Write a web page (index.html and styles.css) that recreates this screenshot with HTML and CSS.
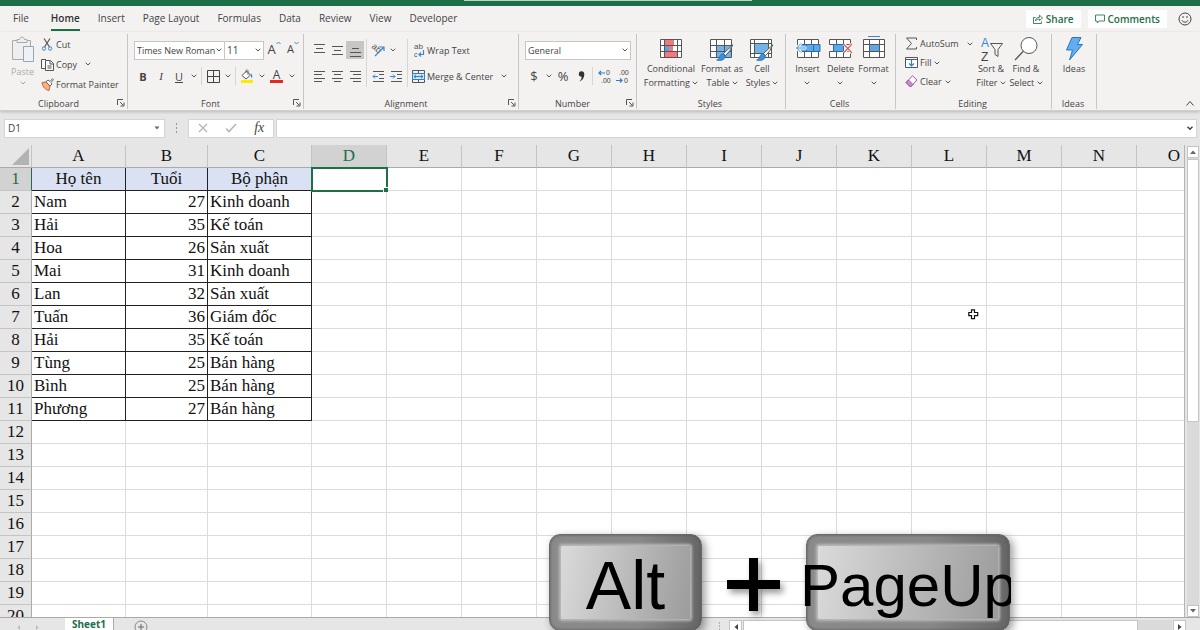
FILE: index.html
```html
<!DOCTYPE html>
<html lang="en">
<head>
<meta charset="utf-8">
<title>Sheet1</title>
<link rel="stylesheet" href="styles.css">
</head>
<body>
<svg class="defs" aria-hidden="true">
  <symbol id="chev" viewBox="0 0 6 4"><path d="M.7.7 3 3 5.300.7" fill="none" stroke="#555" stroke-width="1"/></symbol>
  <symbol id="launch" viewBox="0 0 8 8"><path d="M.5 6V.5H6M3 3l3.500 3.500M7 3.500V7H3.500" fill="none" stroke="#555"/></symbol>
  <symbol id="brush" viewBox="0 0 18 18"><path d="M16.800.8 7.500 9.500l2 2.300Q14.500 7 16.800.8z" fill="#fff" stroke="#555"/><path d="M7 9.700c-3 .2-3 3-4 4.500-.6 1-1.600 1.500-2.300 1.800 3.300 1.300 8.300.3 8.800-4z" fill="#3f8fd6" stroke="#2672b5" stroke-width=".8"/></symbol>
</svg>

<div class="app">
  <div class="titlebar"><div class="titlebar-search"></div></div>

  <nav class="tabs">
    <button class="tab">File</button>
    <button class="tab tab-on">Home</button>
    <button class="tab">Insert</button>
    <button class="tab">Page Layout</button>
    <button class="tab">Formulas</button>
    <button class="tab">Data</button>
    <button class="tab">Review</button>
    <button class="tab">View</button>
    <button class="tab">Developer</button>
    <div class="tabs-right">
      <button class="pill"><svg width="10" height="10" viewBox="0 0 10 10" fill="none" stroke="#2b7a53" stroke-width=".9"><path d="M2.500 3.500h-2v6h8v-2M2.500 7c.3-2.500 1.500-3.700 4-3.700V1.200L9.500 4 6.500 6.500V5C4.500 5 3.500 5.500 2.500 7z"/></svg>Share</button>
      <button class="pill"><svg width="10" height="10" viewBox="0 0 10 10" fill="none" stroke="#2b7a53" stroke-width=".9"><path d="M.5 1h9v6H4L2.200 9V7H.5z"/></svg>Comments</button>
      <button class="smile" aria-label="Feedback"><svg width="14" height="14" viewBox="0 0 14 14" fill="none" stroke="#444"><circle cx="7" cy="7" r="6"/><path d="M4 8.300c1 2.500 5 2.500 6 0M5 4v2M9 4v2"/></svg></button>
    </div>
  </nav>

  <div class="ribbon">
    <section class="group g-clip">
      <div class="body clip-body">
        <button class="big paste">
          <svg width="24" height="27" viewBox="0 0 24 27" fill="#eee" stroke="#aaa"><path d="M1.500 4.500h18v19h-18z"/><path d="M6 6.500V3.500h2.500C9 .3 13 .3 13.500 3.500H16v3z"/><path d="M12.500 10.500h10v15h-10z" fill="#eef1f6" stroke="#9aa6b5"/></svg>
          <span>Paste</span><svg class="chev dim"><use href="#chev"/></svg>
        </button>
        <div class="stack">
          <button class="cmd"><svg width="13" height="13" viewBox="0 0 13 13" fill="none"><path d="M3 .5 8.500 9M9 .5 3.500 9" stroke="#555" stroke-width="1.200"/><circle cx="3" cy="10.500" r="1.700" stroke="#3b86cf"/><circle cx="9.200" cy="10.500" r="1.700" stroke="#3b86cf"/></svg>Cut</button>
          <button class="cmd"><svg width="13" height="13" viewBox="0 0 13 13" fill="#f8f8f8" stroke="#555"><path d="M5 10.500H.5V1.500H5"/><path d="M4.500 2.500h5l3 3v7h-8z"/><path d="M9 3v3h3M6.500 8h4M6.500 10h4"/></svg>Copy<svg class="chev gap"><use href="#chev"/></svg></button>
          <button class="cmd"><svg width="13" height="13" viewBox="0 0 13 13"><path d="M1 4.500 5 4l4 4-1 4.500C4.500 12 1.500 9 1 4.500z" fill="#f3b184" stroke="#c9662c"/><path d="M5 3.800 7 2l2 1.500L11.500.7l1 1L10 4.500 11 6 9 8z" fill="#fff" stroke="#555" stroke-width=".9"/></svg>Format Painter</button>
        </div>
      </div>
      <div class="label"><span>Clipboard</span><svg class="launch"><use href="#launch"/></svg></div>
    </section>

    <section class="group g-font">
      <div class="body rows">
        <div class="row">
          <label class="combo combo-font"><select aria-label="Font"><option>Times New Roman</option></select><svg class="chev"><use href="#chev"/></svg></label>
          <label class="combo combo-size"><select aria-label="Font size"><option>11</option></select><svg class="chev"><use href="#chev"/></svg></label>
          <button class="ib size-up" aria-label="Increase font size">A<svg width="5" height="4" viewBox="0 0 5 4"><path d="M.5 3 2.500 1l2 2" fill="none" stroke="#3b86cf"/></svg></button>
          <button class="ib size-down" aria-label="Decrease font size">A<svg width="5" height="4" viewBox="0 0 5 4"><path d="M.5 1 2.500 3l2-2" fill="none" stroke="#3b86cf"/></svg></button>
        </div>
        <div class="row">
          <button class="ib b">B</button><button class="ib i">I</button><button class="ib u">U</button>
          <button class="ch" aria-label="Underline options"><svg class="chev"><use href="#chev"/></svg></button><i class="sep"></i>
          <button class="ib" aria-label="Borders"><svg width="13" height="13" viewBox="0 0 13 13" fill="none" stroke="#444"><path d="M.5.5h12v12H.5zM6.500.5v12M.5 6.500h12"/></svg></button>
          <button class="ch" aria-label="Border options"><svg class="chev"><use href="#chev"/></svg></button><i class="sep"></i>
          <button class="ib" aria-label="Fill color"><svg width="14" height="14" viewBox="0 0 14 14"><path d="M2 6.500 6.500 2l4 4L6 10z" fill="#fff" stroke="#555"/><path d="M6 4V1.500q1.500-1.500 2 0V6" fill="none" stroke="#555" stroke-width=".8"/><path d="M10.500 4.500q2.500 1 1.500 5-1-1-1.500-5z" fill="#2f7fcc"/><path d="M1 11h12v3H1z" fill="#ffea00"/></svg></button>
          <button class="ch" aria-label="Fill options"><svg class="chev"><use href="#chev"/></svg></button>
          <button class="ib fontcolor" aria-label="Font color">A</button>
          <button class="ch" aria-label="Font color options"><svg class="chev"><use href="#chev"/></svg></button>
        </div>
      </div>
      <div class="label"><span>Font</span><svg class="launch"><use href="#launch"/></svg></div>
    </section>

    <section class="group g-align">
      <div class="body align-body">
        <div class="rows">
          <div class="row">
            <button class="ib" aria-label="Top align"><svg width="13" height="13" viewBox="0 0 13 13" stroke="#555"><path d="M1 .5h11M3 4.500h7M1 8.500h11"/></svg></button>
            <button class="ib" aria-label="Middle align"><svg width="13" height="13" viewBox="0 0 13 13" stroke="#555"><path d="M1 2.500h11M3 6.500h7M1 10.500h11"/></svg></button>
            <button class="ib pressed" aria-label="Bottom align"><svg width="13" height="13" viewBox="0 0 13 13" stroke="#555"><path d="M3 4.500h7M1 8.500h11M1 12.500h11"/></svg></button>
          </div>
          <div class="row">
            <button class="ib" aria-label="Align left"><svg width="13" height="13" viewBox="0 0 13 13" stroke="#555"><path d="M1 1.500h11M1 4.500h8M1 8.500h11M1 11.500h8"/></svg></button>
            <button class="ib" aria-label="Center"><svg width="13" height="13" viewBox="0 0 13 13" stroke="#555"><path d="M1 1.500h11M3 4.500h7M1 8.500h11M3 11.500h7"/></svg></button>
            <button class="ib" aria-label="Align right"><svg width="13" height="13" viewBox="0 0 13 13" stroke="#555"><path d="M1 1.500h11M4 4.500h8M1 8.500h11M4 11.500h8"/></svg></button>
          </div>
        </div>
        <i class="sep tall"></i>
        <div class="rows">
          <div class="row">
            <button class="ib glyphs" aria-label="Orientation"><svg width="14" height="14" viewBox="0 0 14 14"><text x="0" y="8" transform="rotate(40 5 6)" font-size="9" fill="#555">ab</text><path d="M4 13 12.500 4.500M9 4h4v4" fill="none" stroke="#3b86cf" stroke-width="1.200"/></svg></button>
            <button class="ch" aria-label="Orientation options"><svg class="chev"><use href="#chev"/></svg></button>
          </div>
          <div class="row">
            <button class="ib" aria-label="Decrease indent"><svg width="13" height="13" viewBox="0 0 13 13" fill="none" stroke="#555"><path d="M1 1.500h11M7 4.500h5M7 8.500h5M1 11.500h11"/><path d="M6 6.500H1M3 4.500l-2 2 2 2" stroke="#3b86cf"/></svg></button>
            <button class="ib" aria-label="Increase indent"><svg width="13" height="13" viewBox="0 0 13 13" fill="none" stroke="#555"><path d="M1 1.500h11M7 4.500h5M7 8.500h5M1 11.500h11"/><path d="M0 6.500h5M3 4.500l2 2-2 2" stroke="#3b86cf"/></svg></button>
          </div>
        </div>
        <i class="sep tall"></i>
        <div class="rows">
          <div class="row"><button class="cmd glyphs"><svg width="13" height="13" viewBox="0 0 13 13"><text x="2" y="5" font-size="8" fill="#555">ab</text><text x="2" y="13" font-size="7" fill="#555">c</text><path d="M11.500 6v4.500H7M9 8.500l-2 2 2 2" fill="none" stroke="#3b86cf" stroke-width="1.200"/></svg>Wrap Text</button></div>
          <div class="row"><button class="cmd"><svg width="13" height="13" viewBox="0 0 13 13" fill="none" stroke="#555"><path d="M.5.5h12v12H.5zM6.500.5v3M6.500 9.500v3"/><path d="M.5 3.500h12v6H.5z" fill="#cfe5f8" stroke="#2f7fcc"/><path d="M2 6.500h9M4 4.800 2 6.500l2 1.700M9 4.800l2 1.700-2 1.700" stroke="#2f7fcc"/></svg>Merge &amp; Center<svg class="chev gap"><use href="#chev"/></svg></button></div>
        </div>
      </div>
      <div class="label"><span>Alignment</span><svg class="launch"><use href="#launch"/></svg></div>
    </section>

    <section class="group g-num">
      <div class="body rows">
        <div class="row"><label class="combo combo-num"><select aria-label="Number format"><option>General</option></select><svg class="chev"><use href="#chev"/></svg></label></div>
        <div class="row">
          <button class="ib sym">$</button><button class="ch" aria-label="Currency options"><svg class="chev"><use href="#chev"/></svg></button>
          <button class="ib sym">%</button>
          <button class="ib" aria-label="Comma style"><svg width="7" height="11" viewBox="0 0 7 11"><circle cx="3.500" cy="3" r="2.700" fill="#333"/><path d="M6.200 3c.3 4-2 6.500-5 7.500 2-1.700 2.700-3.500 2.300-5z" fill="#333"/></svg></button><i class="sep"></i>
          <button class="ib glyphs" aria-label="Increase decimal"><svg width="13" height="13" viewBox="0 0 13 13"><text x="8" y="5" font-size="7" fill="#444">0</text><text x="3" y="13" font-size="7" fill="#444">.00</text><path d="M7 3H1M3 1 1 3l2 2" fill="none" stroke="#2f7fcc" stroke-width="1.200"/></svg></button>
          <button class="ib glyphs" aria-label="Decrease decimal"><svg width="13" height="13" viewBox="0 0 13 13"><text x="3" y="5" font-size="7" fill="#444">.00</text><text x="8" y="13" font-size="7" fill="#444">0</text><path d="M0 10.500h6M4 8.500l2 2-2 2" fill="none" stroke="#2f7fcc" stroke-width="1.200"/></svg></button>
        </div>
      </div>
      <div class="label"><span>Number</span><svg class="launch"><use href="#launch"/></svg></div>
    </section>

    <section class="group g-styles">
      <div class="body bigs">
        <button class="big w58"><svg width="24" height="26" viewBox="0 0 24 26"><path d="M1.500 3.500h21v18h-21z" fill="#fff"/><path d="M6 4h9v5H6zM6 16h12v5H6z" fill="#f4777b"/><path d="M6 9h4v7H6z" fill="#5ba3e0"/><path d="M10 9h4v7h-4z" fill="#f4777b"/><path d="M1.500 3.500h21v18h-21zM1.500 9.500h21M1.500 15.500h21M5.500 3.500v18M18.500 3.500v18" fill="none" stroke="#555"/></svg><span>Conditional<br>Formatting <svg class="chev"><use href="#chev"/></svg></span></button>
        <button class="big w44"><svg width="26" height="26" viewBox="0 0 26 26"><path d="M1.500 3.500h21v18h-21z" fill="#fff"/><path d="M7 9h15v12H7z" fill="#72b3ea"/><path d="M1.500 3.500h21v18h-21zM1.500 9.500h21M1.500 15.500h21M7.500 3.500v18M15.500 3.500v18" fill="none" stroke="#555"/><use href="#brush" x="7" y="8" width="18" height="18"/></svg><span>Format as<br>Table <svg class="chev"><use href="#chev"/></svg></span></button>
        <button class="big w36"><svg width="26" height="26" viewBox="0 0 26 26"><path d="M1.500 3.500h21v18h-21z" fill="#fff"/><path d="M5 7h14v11H5z" fill="#72b3ea"/><path d="M1.500 3.500h21v18h-21zM1.500 7.500h21M1.500 17.500h21M5.500 3.500v18M19.500 3.500v18" fill="none" stroke="#555"/><use href="#brush" x="7" y="8" width="18" height="18"/></svg><span>Cell<br>Styles <svg class="chev"><use href="#chev"/></svg></span></button>
      </div>
      <div class="label"><span>Styles</span></div>
    </section>

    <section class="group g-cells">
      <div class="body bigs">
        <button class="big w32"><svg width="26" height="26" viewBox="0 0 26 26"><path d="M2.500 3.500h21v18h-21z" fill="#fff"/><path d="M2.500 3.500h21v18h-21zM9.500 3.500v18M16.500 3.500v18" fill="none" stroke="#555"/><path d="M5 8.500h20v7H5z" fill="#5ba9ea" stroke="#2b6ca8"/><path d="M11.500 8.500v7M18.500 8.500v7" stroke="#2b6ca8"/><path d="M12 12H1.500M6 7.500 1.500 12 6 16.500" fill="none" stroke="#fff" stroke-width="3"/><path d="M12 12H1.500M6 7.500 1.500 12 6 16.500" fill="none" stroke="#3b86cf"/></svg><span>Insert<br><svg class="chev"><use href="#chev"/></svg></span></button>
        <button class="big w32"><svg width="26" height="26" viewBox="0 0 26 26"><path d="M1.500 3.500h21v5h-21zM1.500 15.500h21v6h-21z" fill="#fff" stroke="#555"/><path d="M8.500 3.500v5M15.500 3.500v5M8.500 15.500v6M15.500 15.500v6" stroke="#555"/><path d="M5.500 8.500h10v7h-10z" fill="#5ba9ea" stroke="#2b6ca8"/><path d="m16 8 8 9M24 8l-8 9" stroke="#fff" stroke-width="3"/><path d="m15.500 8 8.500 9M24 8l-8.500 9" stroke="#e05a50" stroke-width="1.200"/></svg><span>Delete<br><svg class="chev"><use href="#chev"/></svg></span></button>
        <button class="big w32"><svg width="26" height="26" viewBox="0 0 26 26"><path d="M7 .5h12" stroke="#3b86cf"/><path d="M2.500 3.500h21v18h-21z" fill="#fff"/><path d="M8 9h10v6H8z" fill="#5ba9ea"/><path d="M2.500 3.500h21v18h-21zM2.500 8.500h21M2.500 15.500h21M8.500 3.500v18M18.500 3.500v18" fill="none" stroke="#555"/></svg><span>Format<br><svg class="chev"><use href="#chev"/></svg></span></button>
      </div>
      <div class="label"><span>Cells</span></div>
    </section>

    <section class="group g-edit">
      <div class="body edit-body">
        <div class="stack">
          <button class="cmd"><svg width="13" height="13" viewBox="0 0 13 13" fill="none" stroke="#555"><path d="M11.500 3V1H1.500l5 5.500-5 5.500h10v-2"/></svg>AutoSum<svg class="chev gap"><use href="#chev"/></svg></button>
          <button class="cmd"><svg width="13" height="13" viewBox="0 0 13 13" fill="#fff" stroke="#555"><path d="M.5 1.500h12v10H.5zM.5 3.500h12"/><path d="M6.500 4v6M4 7.500l2.500 2.500L9 7.500" fill="none" stroke="#2f7fcc" stroke-width="1.200"/></svg>Fill<svg class="chev near"><use href="#chev"/></svg></button>
          <button class="cmd"><svg width="13" height="13" viewBox="0 0 13 13" fill="#fff" stroke="#a64fb0"><path d="m1 7.500 6.500-6.700L12 5l-6.500 7z"/><path d="M3.500 5 8 9.500 5.500 12 1 7.500z" fill="#c98bd0"/></svg>Clear<svg class="chev near"><use href="#chev"/></svg></button>
        </div>
        <button class="big w36 glyphs"><svg width="26" height="26" viewBox="0 0 26 26"><text x="3" y="11" font-size="12" fill="#2f8bd8">A</text><text x="3" y="25" font-size="12" fill="#444">Z</text><path d="M12.500 7.500h12l-4.500 6v7l-3-2v-5z" fill="none" stroke="#555"/></svg><span>Sort &amp;<br>Filter <svg class="chev"><use href="#chev"/></svg></span></button>
        <button class="big w34"><svg width="26" height="26" viewBox="0 0 26 26" fill="#fff" stroke="#555"><circle cx="16" cy="9.500" r="8"/><path d="M10.300 15.300 2 24" stroke-width="1.300"/></svg><span>Find &amp;<br>Select <svg class="chev"><use href="#chev"/></svg></span></button>
      </div>
      <div class="label"><span>Editing</span></div>
    </section>

    <section class="group g-ideas">
      <div class="body bigs"><button class="big w36"><svg width="26" height="26" viewBox="0 0 26 26"><path d="M11 1.500h9l-3.500 7h5L8.500 24l3-10H5.500z" fill="#62aef0" stroke="#2b76b9"/></svg><span>Ideas</span></button></div>
      <div class="label"><span>Ideas</span></div>
    </section>
    <button class="collapse" aria-label="Collapse ribbon"><svg width="8" height="5" viewBox="0 0 8 5"><path d="m.5 4.500 3.500-4 3.500 4" fill="none" stroke="#444"/></svg></button>
  </div>

  <div class="formula">
    <label class="namebox"><input type="text" value="D1" aria-label="Name box"><svg width="6" height="4" viewBox="0 0 6 4"><path d="M.5.5h5L3 3.500z" fill="#666"/></svg></label>
    <svg class="dots" width="3" height="11" viewBox="0 0 3 11" fill="#999"><path d="M1 0h1v2H1zM1 4h1v2H1zM1 8h1v2H1z"/></svg>
    <div class="fxbox">
      <button aria-label="Cancel"><svg width="10" height="10" viewBox="0 0 10 10"><path d="m1 1 8 8M9 1 1 9" stroke="#b4b4b4" stroke-width="1.200"/></svg></button>
      <button aria-label="Enter"><svg width="12" height="10" viewBox="0 0 12 10"><path d="m1 5.500 3 3L11 1" fill="none" stroke="#b4b4b4" stroke-width="1.600"/></svg></button>
      <button class="fx">fx</button>
    </div>
    <label class="entry"><input type="text" aria-label="Formula"><svg width="6" height="4" viewBox="0 0 6 4"><path d="M.5.7 3 3.200 5.500.7" fill="none" stroke="#444" stroke-width="1.500"/></svg></label>
  </div>

  <main class="work">
    <div class="grid"><table class="sheet" id="sheet"></table></div>
    <div class="vscroll">
      <button aria-label="Scroll up"><svg width="6" height="4" viewBox="0 0 6 4"><path d="M0 4h6L3 .5z" fill="#666"/></svg></button>
      <div class="vtrack"><div class="vthumb"></div></div>
      <button aria-label="Scroll down"><svg width="6" height="4" viewBox="0 0 6 4"><path d="M0 0h6L3 3.500z" fill="#666"/></svg></button>
    </div>
  </main>

  <footer class="bottom">
    <div class="nav-arrows"><svg width="24" height="5" viewBox="0 0 24 5" fill="#bbb"><path d="M3 0v5L.5 2.500zM19 0v5l2.500-2.500z"/></svg></div>
    <button class="sheet-tab">Sheet1</button>
    <button class="add" aria-label="New sheet"><svg width="14" height="14" viewBox="0 0 14 14" fill="none" stroke="#888"><circle cx="7" cy="7" r="6"/><path d="M7 4v6M4 7h6" stroke="#666"/></svg></button>
    <div class="hscroll">
      <svg class="dots" width="3" height="9" viewBox="0 0 3 11" fill="#999"><path d="M1 0h1v2H1zM1 4h1v2H1zM1 8h1v2H1z"/></svg>
      <button aria-label="Scroll left"><svg width="4" height="6" viewBox="0 0 4 6"><path d="M4 0v6L.5 3z" fill="#444"/></svg></button>
      <div class="htrack"><div class="hthumb"></div></div>
      <button aria-label="Scroll right"><svg width="4" height="6" viewBox="0 0 4 6"><path d="M0 0v6l3.500-3z" fill="#444"/></svg></button>
    </div>
  </footer>

  <svg class="cursor" width="11" height="11" viewBox="0 0 11 11"><path d="M3.500.8h3v2.700h3.200v3.200H6.500v3H3.500v-3H.8V3.500h2.700z" fill="#fff" stroke="#111" stroke-width="1.200"/></svg>

  <div class="keys">
    <div class="key key-alt"><div class="face"></div><span>Alt</span></div>
    <svg class="plus" width="53" height="53" viewBox="0 0 53 53"><path d="M22 0h9v22h22v9H31v22h-9V31H0v-9h22z"/></svg>
    <div class="key key-page"><div class="face"></div><span>PageUp</span></div>
  </div>
</div>
<script src="script.js"></script>
</body>
</html>
```
FILE: styles.css
```css
* { box-sizing: border-box; }
body { margin: 0; background: #e6e6e6; font-family: "Open Sans", "Noto Sans", sans-serif; font-size: 10px; color: #444; }
button, input, select { font: inherit; color: inherit; border: 0; padding: 0; margin: 0; background: none; border-radius: 0; }
svg { display: block; flex: none; }
.defs { position: absolute; width: 0; height: 0; }
.app { position: relative; display: flex; flex-direction: column; height: 100vh; min-height: 400px; overflow: hidden; }

.titlebar { height: 6px; background: #1e6e47; flex: none; }
.titlebar-search { width: 24%; height: 1px; margin: 0 auto; background: #b9d6c6; transform: translateX(8px); }

.tabs { display: flex; align-items: center; height: 26px; flex: none; background: #f3f2f1; padding: 0 8px 0 13px; gap: 18px; font-size: 10px; }
.tab { height: 24px; white-space: nowrap; padding-bottom: 2px; }
.tab:first-child { margin-right: 4px; }
.tab-on { font-weight: 600; color: #333; border-bottom: 2px solid #1e6e47; padding: 2px 0 2px; }
.tabs-right { margin-left: auto; display: flex; align-items: center; gap: 7px; }
.pill { display: flex; align-items: center; gap: 3px; height: 18px; padding: 0 7px; background: #fff; color: #1e6e47; font-weight: 600; font-size: 10px; }
.smile { margin-left: 4px; }

.ribbon { display: flex; align-items: stretch; flex: none; padding-top: 2px; background: #f3f2f1; border-bottom: 1px solid #d0cfce; box-shadow: 0 1px 3px #0003; z-index: 1; font-size: 9px; }
.group { display: flex; flex-direction: column; flex: none; border-right: 1px solid #c8c6c4; margin-bottom: 1px; }
.g-clip { width: 128px; } .g-font { width: 176px; } .g-align { width: 215px; } .g-num { width: 118px; }
.g-styles { width: 149px; } .g-cells { width: 110px; } .g-edit { width: 156px; } .g-ideas { width: 45px; }
.body { height: 63px; }
.label { display: flex; align-items: center; height: 12px; padding-right: 2px; }
.label span { flex: 1; text-align: center; font-size: 9px; }
.launch { width: 8px; height: 8px; }
.chev { display: inline-block; width: 6px; height: 4px; vertical-align: 1px; }
.gap { margin-left: 6px; } .near { margin-left: 1px; } .dim { opacity: .5; }

.rows { display: flex; flex-direction: column; }
.body.rows, .align-body { padding-top: 3px; }
.row { display: flex; align-items: center; height: 26px; }
.ib { display: flex; align-items: center; justify-content: center; width: 18px; height: 18px; font-size: 11px; }
.ch { display: flex; align-items: center; justify-content: center; width: 11px; height: 18px; }
.sep { width: 1px; height: 18px; background: #d8d6d4; margin: 0 2px; }
.tall { height: 48px; margin-top: 2px; }
.b { font-weight: 700; } .i { font-style: italic; font-family: "Liberation Serif", serif; } .u { text-decoration: underline; }
.pressed { background: #c8c6c4; }
.cmd { display: flex; align-items: center; gap: 2px; height: 19px; white-space: nowrap; }
.glyphs svg { overflow: visible; font-family: "Liberation Sans", Arial, sans-serif; }

.clip-body { display: flex; padding: 0 0 0 10px; }
.stack { display: flex; flex-direction: column; }
.paste { color: #aaa; width: 25px; margin-right: 6px; gap: 2px; }
.clip-body .cmd { height: 20px; }
.big { display: flex; flex-direction: column; align-items: center; line-height: 14px; padding-top: 2px; white-space: nowrap; text-align: center; height: 60px; }
.w58 { width: 58px; } .w44 { width: 44px; } .w36 { width: 36px; } .w34 { width: 34px; } .w32 { width: 33px; }
.bigs { display: flex; justify-content: center; }
.g-styles .bigs { justify-content: flex-start; padding-left: 5px; }
.edit-body { display: flex; padding-left: 9px; }
.edit-body .stack { width: 68px; }
.edit-body .w36, .edit-body .w34 { flex: none; }

.g-font .rows, .g-num .rows { padding-left: 6px; }
.combo { display: grid; align-items: center; height: 19px; background: #fff; border: 1px solid #c8c6c4; font-size: 10px; }
.combo select { grid-area: 1 / 1; appearance: none; width: 100%; padding-left: 2px; outline: 0; white-space: nowrap; }
.combo .chev { grid-area: 1 / 1; justify-self: end; margin-right: 2px; pointer-events: none; }
.combo-font { width: 91px; font-size: 9px; } .combo-size { width: 39px; border-left: 0; } .combo-num { width: 106px; font-size: 9px; }
.size-up { font-size: 13px; align-items: flex-start; line-height: 16px; width: 20px; }
.size-down { font-size: 11px; align-items: flex-start; line-height: 16px; }
.fontcolor { height: 14px; border-bottom: 3px solid #e8281c; width: 13px; margin: 0 3px; line-height: 11px; font-size: 12px; }
.align-body { display: flex; padding-left: 6px; }
.align-body .cmd { padding-left: 2px; }
.sym { font-size: 13px; }

.collapse { margin: auto 6px 4px auto; }

.formula { display: flex; align-items: center; flex: none; height: 34px; padding: 0 3px 0 4px; gap: 2px; }
.formula .dots { margin: 0 8px; }
.namebox, .entry, .fxbox { display: flex; align-items: center; height: 19px; background: #fff; border: 1px solid #d4d4d4; }
.namebox { width: 161px; padding: 0 4px 0 3px; }
.formula input { flex: 1; min-width: 0; outline: 0; font-size: 10px; }
.fxbox { width: 86px; justify-content: space-around; }
.fx { font-family: "Liberation Serif", serif; font-style: italic; font-size: 14px; line-height: 14px; }
.entry { flex: 1; padding-right: 3px; }

.work { display: flex; flex: 1; min-height: 0; }
.grid { flex: 1; min-width: 0; overflow: hidden; border-right: 1px solid #b5b5b5; background: #fff; }
.sheet { table-layout: fixed; border-collapse: separate; border-spacing: 0; width: 1212px; font-family: "Liberation Serif", serif; font-size: 17px; color: #111; }
.sheet th, .sheet td { height: 23px; padding: 0 2px; line-height: 22px; font-weight: 400; border-right: 1px solid #dcdcdc; border-bottom: 1px solid #dcdcdc; white-space: nowrap; }
.sheet th { background: #e6e6e6; text-align: center; padding: 0; border-color: #c4c4c4; }
.sheet thead th { border-bottom-color: #aaa; }
.sheet tbody th { border-right-color: #aaa; }
.sheet thead th.on { background: #d2d2d2; color: #1e6e47; border-bottom-color: #1e6e47; }
.sheet tbody th.on { background: #d2d2d2; color: #1e6e47; border-right-color: #1e6e47; }
.sheet td.data { border-color: #222; }
.sheet td.head { background: #d9e1f2; text-align: center; }
.sheet td.num { text-align: right; }
.sheet td.active { position: relative; outline: 2px solid #1e6e47; outline-offset: -1px; border-color: transparent; }
.sheet td.active::after { content: ""; position: absolute; right: -2px; bottom: -2px; width: 4px; height: 4px; background: #1e6e47; border: 1px solid #fff; box-sizing: content-box; border-width: 1px 0 0 1px; }
.corner svg { margin: 0 2px 0 auto; }

.vscroll { width: 15px; padding: 1px 1px 0 2px; display: flex; flex-direction: column; flex: none; }
.vscroll button { height: 12px; display: flex; align-items: center; justify-content: center; background: #fff; border: 1px solid #c4c4c4; flex: none; }
.vtrack { flex: 1; background: #dadada; padding: 1px 0; }
.vthumb { height: 59%; background: #fff; border: 1px solid #c4c4c4; }

.bottom { display: flex; flex: none; height: 13px; border-top: 1px solid #aaa; overflow: hidden; }
.nav-arrows { width: 65px; padding: 7px 0 0 17px; }
.sheet-tab { width: 49px; height: 13px; line-height: 13px; background: #fff; border-right: 1px solid #aaa; color: #1e6e47; font-weight: 700; font-size: 10px; }
.add { margin: 2px 0 0 20px; height: 14px; }
.hscroll { display: flex; align-items: flex-start; width: 39%; height: 14px; margin: 2px 14px 0 auto; gap: 1px; }
.hscroll .dots { margin: 2px 7px 0 0; }
.hscroll button { width: 13px; height: 13px; display: flex; align-items: center; justify-content: center; background: #fff; border: 1px solid #c4c4c4; }
.htrack { flex: 1; height: 13px; background: #dadada; }
.hthumb { width: 92%; height: 13px; background: #fff; border: 1px solid #c4c4c4; }

.cursor { position: absolute; left: 968px; top: 309px; }
.keys { position: absolute; left: 549px; top: 534px; display: flex; }
.key { position: relative; height: 97px; border-radius: 11px; padding: 11px; border: 1px solid #6a6a6a; background: linear-gradient(90deg, #8a8a8a, #888 60%, #666); box-shadow: 3px 3px 8px #0006, inset 0 0 3px #555; display: flex; color: #000; font-family: "Liberation Sans", Arial, sans-serif; }
.face { flex: 1; background: linear-gradient(100deg, #dadada, #9c9c9c); border-radius: 1px; box-shadow: 0 0 3px 2px #bcbcbc; }
.key span { position: absolute; white-space: nowrap; }
.key-alt { width: 153px; }
.key-alt span { left: 0; right: 0; text-align: center; top: 11px; font-size: 68px; line-height: 78px; }
.key-page { width: 204px; }
.key-page span { left: -7px; right: -2px; top: 16px; font-size: 60px; line-height: 69px; height: 80px; overflow: hidden; }
.plus { margin: 24px 26px 0 25px; filter: drop-shadow(3px 4px 3px #0006); }
```
FILE: script.js
```js
const widths = [32, 94, 82, 104, 75, 75, 75, 75, 75, 75, 75, 75, 75, 75, 75, 75];
const letters = "ABCDEFGHIJKLMNO".split("");
const people = [
  ["Họ tên", "Tuổi", "Bộ phận"],
  ["Nam", "27", "Kinh doanh"],
  ["Hải", "35", "Kế toán"],
  ["Hoa", "26", "Sản xuất"],
  ["Mai", "31", "Kinh doanh"],
  ["Lan", "32", "Sản xuất"],
  ["Tuấn", "36", "Giám đốc"],
  ["Hải", "35", "Kế toán"],
  ["Tùng", "25", "Bán hàng"],
  ["Bình", "25", "Bán hàng"],
  ["Phương", "27", "Bán hàng"]
];

let html = "<colgroup>" + widths.map(w => `<col style="width:${w}px">`).join("") + "</colgroup>";
html += '<thead><tr><th class="corner"><svg width="17" height="17" viewBox="0 0 17 17"><path d="M17 0v17H0z" fill="#b3b3b3"/></svg></th>';
html += letters.map(l => `<th${l === "D" ? ' class="on"' : ""}>${l}</th>`).join("") + "</tr></thead><tbody>";
for (let r = 0; r < 20; r++) {
  html += `<tr><th${r === 0 ? ' class="on"' : ""}>${r + 1}</th>`;
  for (let c = 0; c < letters.length; c++) {
    const text = people[r] && people[r][c];
    let cls = "";
    if (text) cls = "data" + (r === 0 ? " head" : c === 1 ? " num" : "");
    else if (r === 0 && c === 3) cls = "active";
    html += `<td${cls ? ` class="${cls}"` : ""}>${text || ""}</td>`;
  }
  html += "</tr>";
}
document.getElementById("sheet").innerHTML = html + "</tbody>";
```
